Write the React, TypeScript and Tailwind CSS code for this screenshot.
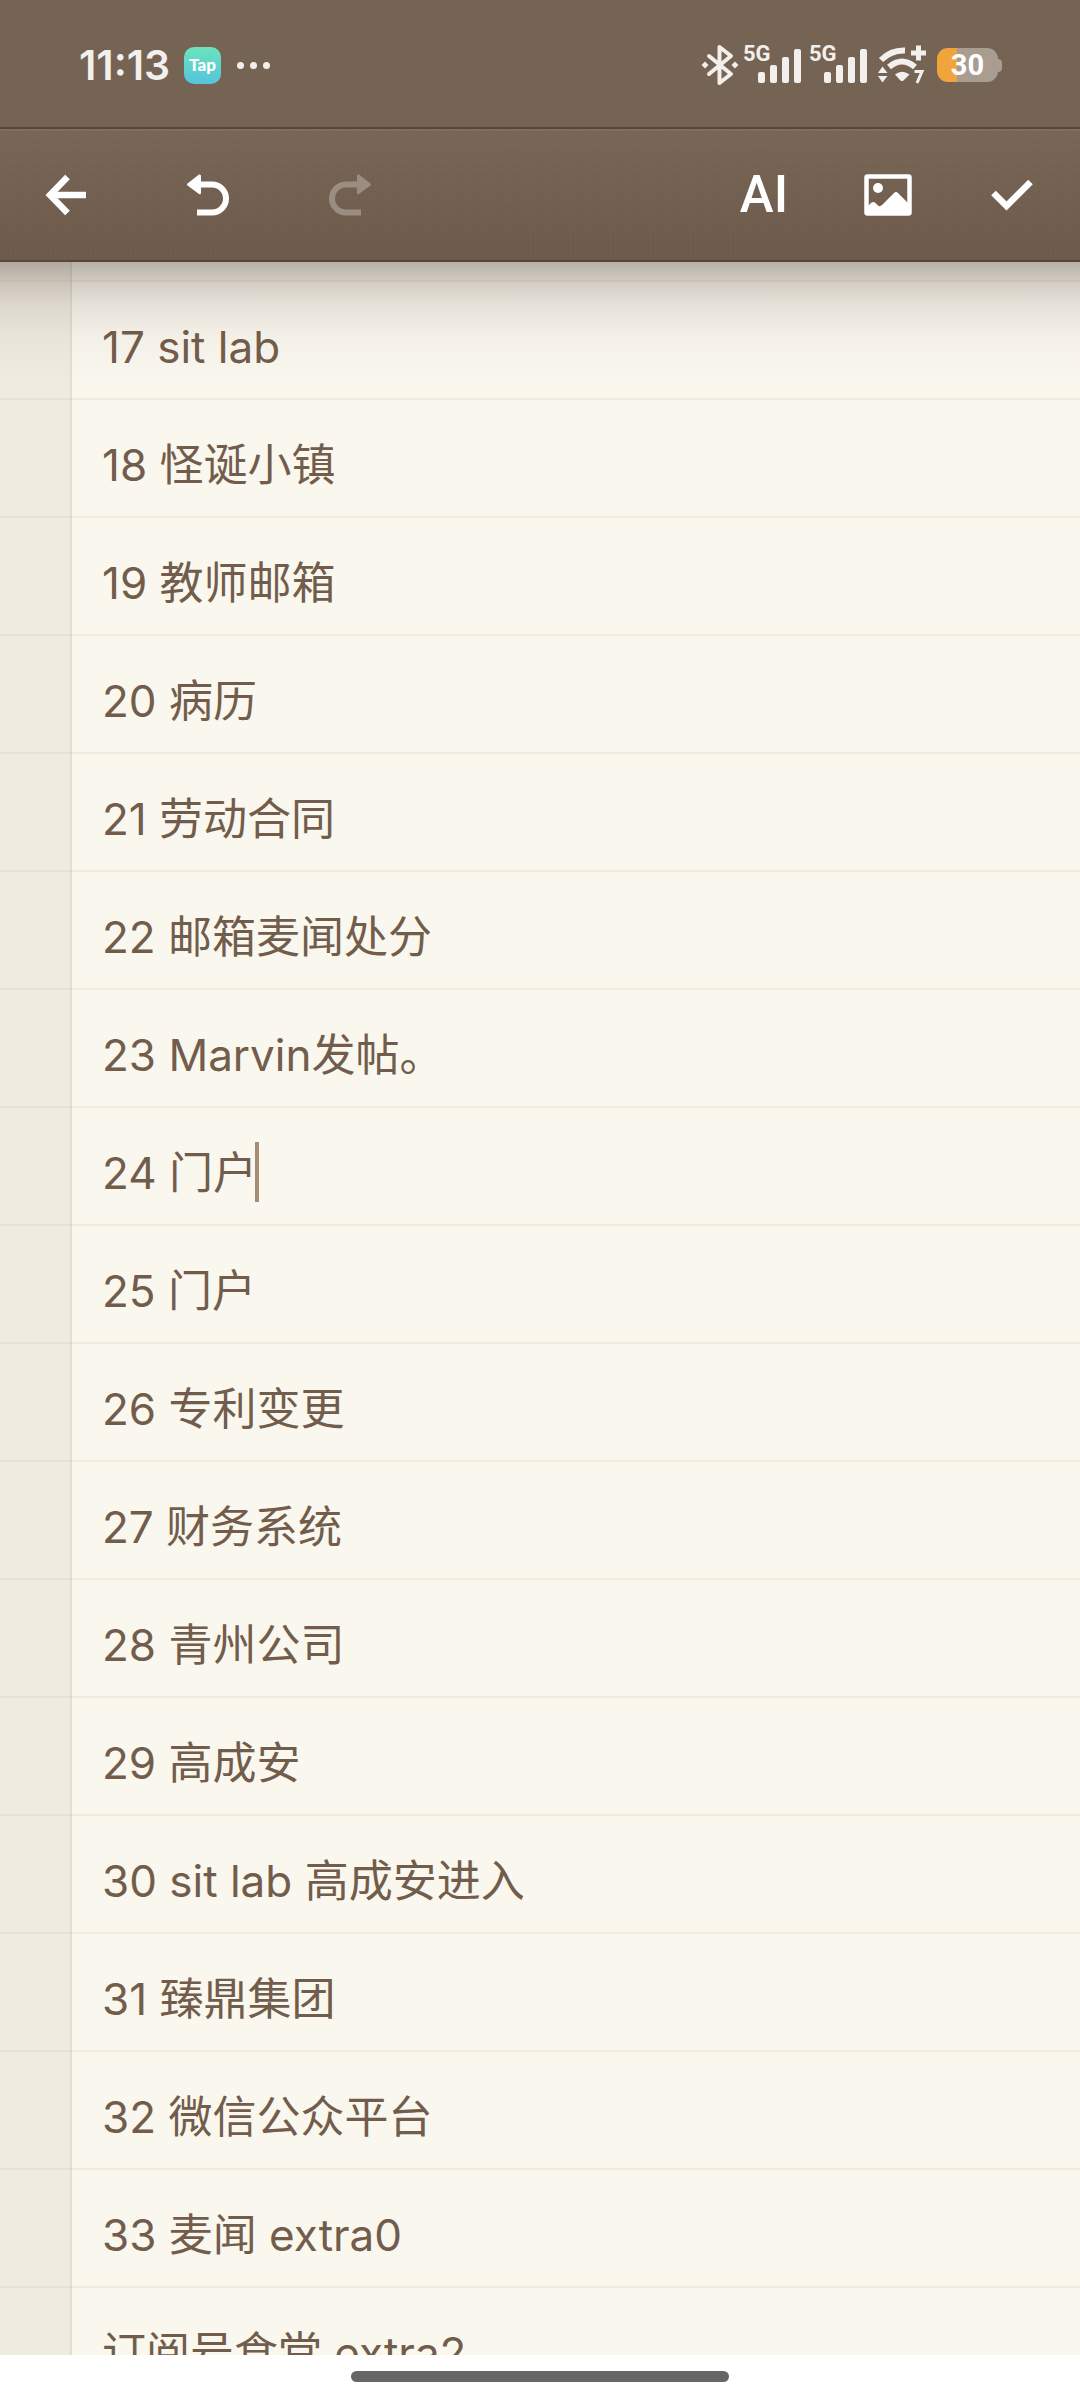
const lines = [
  '17 sit lab',
  '18 怪诞小镇',
  '19 教师邮箱',
  '20 病历',
  '21 劳动合同',
  '22 邮箱麦闻处分',
  '23 Marvin发帖。',
  '24 门户',
  '25 门户',
  '26 专利变更',
  '27 财务系统',
  '28 青州公司',
  '29 高成安',
  '30 sit lab 高成安进入',
  '31 臻鼎集团',
  '32 微信公众平台',
  '33 麦闻 extra0',
  '订阅号食堂 extra2',
];

function Signal() {
  return (
    <div className="flex h-10 items-start">
      <span className="w-[30px] font-[Roboto,sans-serif] text-[22px] leading-[18px] font-bold">5G</span>
      <svg className="-ml-[15px]" width="43" height="40" viewBox="0 0 43 40" fill="currentColor" aria-hidden="true">
        <rect x="0" y="27" width="7" height="11" rx="2" />
        <rect x="12" y="20" width="7" height="18" rx="2" />
        <rect x="24" y="12" width="7" height="26" rx="2" />
        <rect x="36" y="4" width="7" height="34" rx="2" />
      </svg>
    </div>
  );
}

function Bluetooth() {
  return (
    <svg width="38" height="42" viewBox="0 0 38 42" fill="none" stroke="currentColor" strokeWidth="4" strokeLinejoin="round" strokeLinecap="round" aria-hidden="true">
      <path d="M8 12 L30 30 L18.500 39 V3 L30 12 L8 30" />
      <g fill="currentColor" stroke="none">
        <path d="M4 17.500 L7.500 21 L4 24.500 L0.500 21 Z" />
        <path d="M34 17.500 L37.500 21 L34 24.500 L30.500 21 Z" />
      </g>
    </svg>
  );
}

function Wifi() {
  return (
    <svg width="48" height="40" viewBox="0 0 48 40" fill="none" stroke="currentColor" aria-hidden="true">
      <path d="M3 15 Q13 5 27 5.500" strokeWidth="6" />
      <path d="M11 22 Q24 11 37 22" strokeWidth="6" />
      <g fill="currentColor" stroke="none">
        <path d="M17 29.500 Q24 24 31.500 29.500 L25.500 35.500 Q24 36.500 22.500 35.500 Z" />
        <path d="M4.500 21.500 L9.500 28 H0 Z" />
        <path d="M4.500 37.500 L9.500 31 H0 Z" />
      </g>
      <path d="M33 8 H48 M40.500 0.500 V15.500" strokeWidth="5" />
      <path d="M36.500 26.500 H44 L39 38" strokeWidth="3" />
    </svg>
  );
}

function Battery() {
  return (
    <div className="flex items-center">
      <div className="flex h-[34px] w-[61px] items-center justify-center overflow-hidden rounded-[11px] bg-[linear-gradient(to_right,#f2a43c_20px,#a99d91_20px)] font-[Roboto,sans-serif] text-[29px] leading-[34px] font-bold text-white">
        30
      </div>
      <div className="h-[13px] w-1 rounded-r-[4px] bg-[#a99d91]" />
    </div>
  );
}

const toolButton = 'flex h-24 w-24 items-center justify-center';

export default function App() {
  return (
    <div className="flex h-screen flex-col bg-white font-[Inter,sans-serif]">
      <header className="shrink-0 text-[#f2efec]">
        <div className="flex h-[127px] items-center justify-between bg-[#756354] pt-[3px] pr-[78px] pl-[79px]">
          <div className="flex items-center">
            <span className="w-[105px] text-[41px] leading-[48px] font-semibold">11:13</span>
            <span className="flex h-[37px] w-[37px] items-center justify-center rounded-[10px] bg-linear-to-b from-[#6be3bb] to-[#56c3dc] font-[Lato,sans-serif] text-[17px] leading-[20px] font-black text-white">
              Tap
            </span>
            <span className="ml-4 flex gap-[6px]">
              <i className="h-[7px] w-[7px] rounded-full bg-current" />
              <i className="h-[7px] w-[7px] rounded-full bg-current" />
              <i className="h-[7px] w-[7px] rounded-full bg-current" />
            </span>
          </div>
          <div className="flex items-center">
            <Bluetooth />
            <div className="ml-1 flex gap-2">
              <Signal />
              <Signal />
            </div>
            <div className="mr-[11px] ml-[11px]">
              <Wifi />
            </div>
            <Battery />
          </div>
        </div>
        <div className="border-y-2 border-[#57473a] bg-linear-to-b from-[#786656] to-[#6d5a4b] text-white">
          <nav className="flex h-[131px] items-center justify-between border-t-2 border-[#7e6e5f] bg-[repeating-linear-gradient(90deg,rgba(255,255,255,0.012)_0px,rgba(255,255,255,0.012)_1px,transparent_1px,transparent_5px),repeating-linear-gradient(0deg,rgba(0,0,0,0.016)_0px,rgba(0,0,0,0.016)_1px,transparent_1px,transparent_4px)] pr-5 pb-[2px] pl-[18px]">
            <div className="flex gap-[46px]">
              <button type="button" aria-label="返回" className={toolButton}>
                <svg width="42" height="42" viewBox="0 0 42 42" fill="none" stroke="currentColor" strokeWidth="6.500" aria-hidden="true">
                  <path d="M22.500 3 L5 21 L22.500 39" strokeLinejoin="miter" />
                  <path d="M5 21 H41" />
                </svg>
              </button>
              <button type="button" aria-label="撤销" className={toolButton}>
                <svg width="42" height="42" viewBox="0 0 42 42" fill="none" aria-hidden="true">
                  <path d="M10 10.500 H25 A14 14 0 0 1 25 38.500 H10" stroke="currentColor" strokeWidth="6" />
                  <path d="M0.500 9.500 L12 0.500 Q14 0 14 2 V19 Q14 21 12 20 L0.500 11.500 Q-0.500 10.500 0.500 9.500 Z" fill="currentColor" />
                </svg>
              </button>
              <button type="button" aria-label="重做" disabled className={toolButton}>
                <svg className="text-[#9b8d81]" width="42" height="42" viewBox="0 0 42 42" fill="none" aria-hidden="true">
                  <path d="M32 10.500 H17 A14 14 0 0 0 17 38.500 H32" stroke="currentColor" strokeWidth="6" />
                  <path d="M41.500 9.500 L30 0.500 Q28 0 28 2 V19 Q28 21 30 20 L41.500 11.500 Q42.500 10.500 41.500 9.500 Z" fill="currentColor" />
                </svg>
              </button>
            </div>
            <div className="flex gap-7">
              <button type="button" className="flex h-24 w-24 items-center justify-center font-[Roboto,sans-serif] text-[51px] leading-[56px] font-medium">
                AI
              </button>
              <button type="button" aria-label="插入图片" className={toolButton}>
                <svg width="48" height="42" viewBox="0 0 48 42" aria-hidden="true">
                  <rect x="2.500" y="2.500" width="43" height="37" rx="1" fill="none" stroke="currentColor" strokeWidth="4.500" />
                  <circle cx="14" cy="14" r="5" fill="currentColor" />
                  <path d="M3 33 L7 29 Q9 27 11.500 29 L14 31.500 Q16 33 18 31 L30 19 Q32 17 34 19 L46 31 V40 H3 Z" fill="currentColor" />
                </svg>
              </button>
              <button type="button" aria-label="完成" className={toolButton}>
                <svg width="42" height="34" viewBox="0 0 42 34" fill="none" stroke="currentColor" strokeWidth="6.500" aria-hidden="true">
                  <path d="M2.500 15 L15.500 28 L39.500 4" />
                </svg>
              </button>
            </div>
          </nav>
        </div>
      </header>

      <main className="relative flex min-h-0 flex-1 flex-col overflow-hidden bg-[repeating-linear-gradient(to_bottom,rgba(200,150,110,0.13)_0px,rgba(200,150,110,0.13)_2px,transparent_2px,transparent_118px),linear-gradient(to_right,#efebe0_70px,#e3ded3_70px,#e3ded3_72px,#faf7ee_72px)] bg-[position:0_18px,0_0]">
        <textarea
          aria-label="便签内容"
          defaultValue={lines.join('\n')}
          spellCheck={false}
          className="mt-[26px] block w-full flex-1 resize-none overflow-hidden bg-transparent pr-8 pl-[102px] font-[Inter,'Noto_Sans_CJK_SC',sans-serif] text-[44px] leading-[118px] text-[#725d4c] outline-none"
        />
        <div className="absolute top-[880px] left-[255px] h-[60px] w-1 bg-[#a58d78]" />
        <div className="pointer-events-none absolute inset-x-0 top-0 h-[120px] bg-[linear-gradient(to_bottom,rgba(85,70,60,0.4)_0px,rgba(85,70,60,0.24)_20px,rgba(85,70,60,0.12)_42px,rgba(85,70,60,0.04)_75px,transparent_120px)]" />
      </main>

      <footer className="flex h-[45px] shrink-0 items-center justify-center bg-white pb-[2px]">
        <div className="h-[11px] w-[35%] rounded-full bg-[#666666]" />
      </footer>
    </div>
  );
}
